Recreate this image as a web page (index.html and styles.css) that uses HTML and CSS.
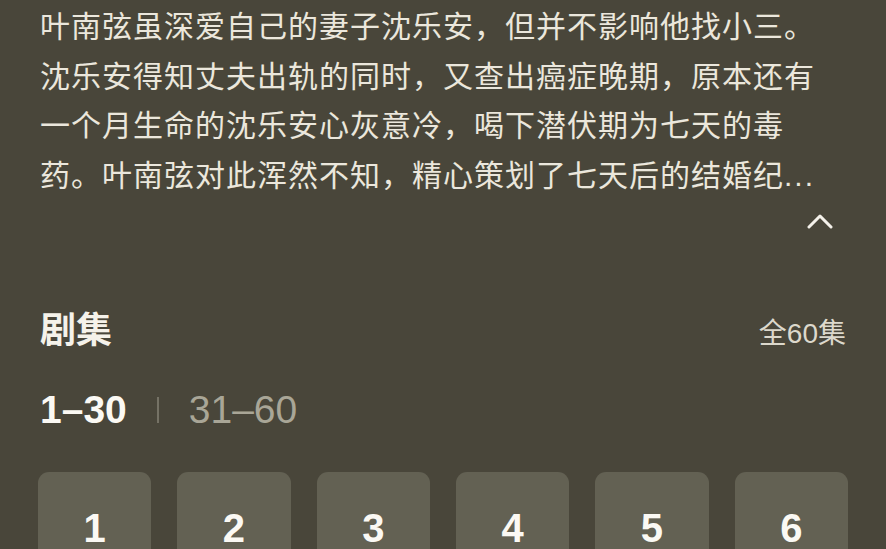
FILE: index.html
```html
<!DOCTYPE html>
<html lang="zh-CN">
<head>
<meta charset="utf-8">
<link rel="stylesheet" href="styles.css">
</head>
<body>
<main class="page">
  <p class="desc">叶南弦虽深爱自己的妻子沈乐安，但并不影响他找小三。<br>沈乐安得知丈夫出轨的同时，又查出癌症晚期，原本还有<br>一个月生命的沈乐安心灰意冷，喝下潜伏期为七天的毒<br>药。叶南弦对此浑然不知，精心策划了七天后的结婚纪<span class="ell">...</span></p>
  <div class="toggle">
    <svg class="chev" width="26" height="18" viewBox="0 0 26 18"><path d="M2 15 L13 4 L24 15" fill="none" stroke="#f4f1ea" stroke-width="3" stroke-linecap="round" stroke-linejoin="round"/></svg>
  </div>
  <div class="head">
    <h2 class="title">剧集</h2>
    <span class="total">全60集</span>
  </div>
  <div class="tabs">
    <span class="tab active">1–30</span>
    <span class="sep"></span>
    <span class="tab">31–60</span>
  </div>
  <div class="grid">
    <div class="ep">1</div>
    <div class="ep">2</div>
    <div class="ep">3</div>
    <div class="ep">4</div>
    <div class="ep">5</div>
    <div class="ep">6</div>
  </div>
</main>
</body>
</html>
```
FILE: styles.css
```css
html, body {
  margin: 0;
  padding: 0;
  background: #49463a;
  height: 100%;
  overflow: hidden;
}
.page {
  font-family: "Liberation Sans", "Noto Sans CJK SC", sans-serif;
  color: #ebe7dc;
}
.desc {
  margin: 0;
  padding: 0 40px;
  font-family: "Noto Sans CJK SC", sans-serif;
  font-size: 30px;
  line-height: 49.5px;
  letter-spacing: 1px;
  color: #ebe7dc;
  white-space: nowrap;
}
.ell {
  font-family: "Liberation Sans", sans-serif;
  letter-spacing: 2px;
}
.toggle {
  display: flex;
  justify-content: flex-end;
  padding-right: 53px;
  margin-top: 12px;
  height: 18px;
}
.chev {
  display: block;
}
.head {
  display: flex;
  justify-content: space-between;
  align-items: baseline;
  padding: 0 40px;
  margin-top: 79px;
}
.title {
  margin: 0;
  font-family: "Noto Sans CJK SC", sans-serif;
  font-size: 36px;
  line-height: 36px;
  font-weight: 700;
  color: #f5f2ea;
}
.total {
  font-family: "Liberation Sans", "Noto Sans CJK SC", sans-serif;
  font-size: 28px;
  line-height: 36px;
  color: #dcd8cc;
}
.tabs {
  display: flex;
  align-items: center;
  padding: 0 40px;
  margin-top: 38px;
  height: 40px;
}
.tab {
  font-size: 39px;
  line-height: 40px;
  color: #a9a697;
}
.tab.active {
  color: #fbf9f4;
  font-weight: 700;
}
.sep {
  width: 2px;
  height: 26px;
  background: #757265;
  margin: 0 30px 0 30px;
}
.grid {
  display: grid;
  grid-template-columns: repeat(6, 1fr);
  gap: 26px;
  padding: 0 38px;
  margin-top: 42px;
}
.ep {
  background: #636153;
  border-radius: 11px;
  height: 120px;
  box-sizing: border-box;
  padding-top: 36px;
  text-align: center;
  font-size: 40px;
  line-height: 40px;
  font-weight: 700;
  color: #fbf9f4;
}
```
